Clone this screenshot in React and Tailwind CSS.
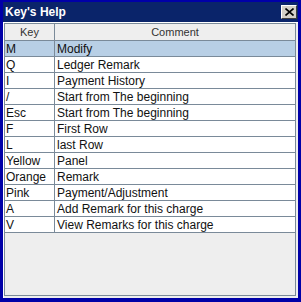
import React from "react";

const rows = [
  ["M", "Modify"],
  ["Q", "Ledger Remark"],
  ["I", "Payment History"],
  ["/", "Start from The beginning"],
  ["Esc", "Start from The beginning"],
  ["F", "First Row"],
  ["L", "last Row"],
  ["Yellow", "Panel"],
  ["Orange", "Remark"],
  ["Pink", "Payment/Adjustment"],
  ["A", "Add Remark for this charge"],
  ["V", "View Remarks for this charge"],
];

export default function App() {
  return (
    <div
      className="w-[301px] h-[302px] bg-[#0000a8] pt-[2px] pl-[3px] pr-[3px] pb-[4px] flex flex-col"
      style={{ fontFamily: '"Liberation Sans", Arial, sans-serif' }}
    >
      <div className="h-[20px] bg-[#0a246a] flex items-center justify-between pl-[2px] pr-[1px]">
        <span className="text-white font-bold text-[12px] leading-none">Key's Help</span>
        <div className="w-[16px] h-[14px] bg-[#d4d0c8] border-t border-l border-white border-r border-b border-r-[#404040] border-b-[#404040] flex items-center justify-center">
          <svg width="9" height="8" viewBox="0 0 9 8">
            <path d="M0.5 0.5 L8.5 7.5 M8.5 0.5 L0.5 7.5" stroke="#000" strokeWidth="1.6" />
          </svg>
        </div>
      </div>
      <div className="flex-1 bg-[#eeeeee] border-t border-l border-white pr-[2px] pb-[2px] flex flex-col">
        <div className="flex-1 border border-[#7a8a99] flex flex-col">
          <div className="flex h-[17px] border-b border-[#7a8a99] bg-[#eeeeee] text-[11px] text-[#333]">
            <div className="w-[50px] border-r border-[#7a8a99] flex items-center justify-center">Key</div>
            <div className="flex-1 flex items-center justify-center">Comment</div>
          </div>
          {rows.map(([k, c], i) => (
            <div
              key={i}
              className={`flex h-[16px] border-b border-[#7a8a99] text-[12px] text-[#111] leading-none ${
                i === 0 ? "bg-[#b8cfe5]" : "bg-white"
              }`}
            >
              <div className="w-[50px] border-r border-[#7a8a99] flex items-center pl-[1px]">{k}</div>
              <div className="flex-1 flex items-center pl-[2px]">{c}</div>
            </div>
          ))}
        </div>
      </div>
    </div>
  );
}
